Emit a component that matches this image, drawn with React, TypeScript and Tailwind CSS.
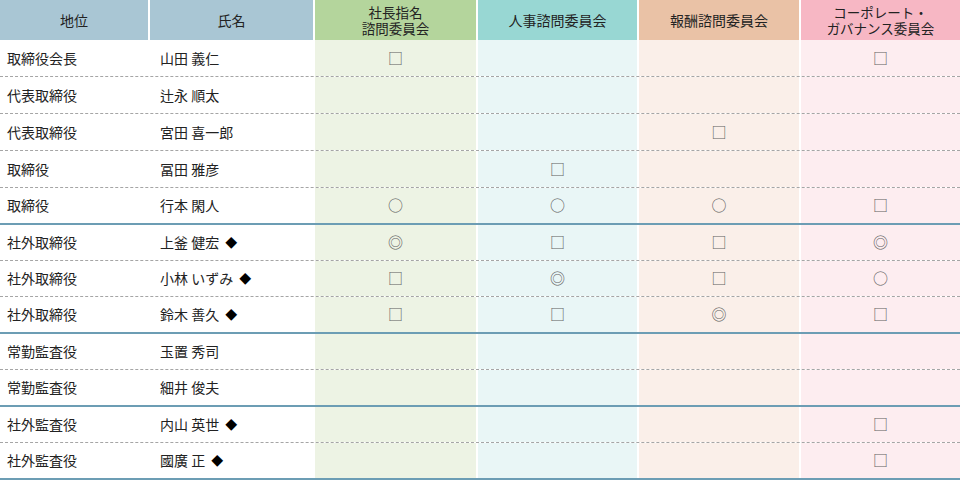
import React from "react";

type Row = {
  role: string;
  name: string;
  outside?: boolean;
  marks: string[];
  h: string;
  edge: "dash" | "solid";
};

const rows: Row[] = [
  { role: "取締役会長", name: "山田 義仁", marks: ["□", "", "", "□"], h: "h-[36px]", edge: "dash" },
  { role: "代表取締役", name: "辻永 順太", marks: ["", "", "", ""], h: "h-[36px]", edge: "dash" },
  { role: "代表取締役", name: "宮田 喜一郎", marks: ["", "", "□", ""], h: "h-[36px]", edge: "dash" },
  { role: "取締役", name: "冨田 雅彦", marks: ["", "□", "", ""], h: "h-[36px]", edge: "dash" },
  { role: "取締役", name: "行本 閑人", marks: ["○", "○", "○", "□"], h: "h-[35px]", edge: "solid" },
  { role: "社外取締役", name: "上釜 健宏", outside: true, marks: ["◎", "□", "□", "◎"], h: "h-[35px]", edge: "dash" },
  { role: "社外取締役", name: "小林 いずみ", outside: true, marks: ["□", "◎", "□", "○"], h: "h-[35px]", edge: "dash" },
  { role: "社外取締役", name: "鈴木 善久", outside: true, marks: ["□", "□", "◎", "□"], h: "h-[35px]", edge: "solid" },
  { role: "常勤監査役", name: "玉置 秀司", marks: ["", "", "", ""], h: "h-[35px]", edge: "dash" },
  { role: "常勤監査役", name: "細井 俊夫", marks: ["", "", "", ""], h: "h-[35px]", edge: "solid" },
  { role: "社外監査役", name: "内山 英世", outside: true, marks: ["", "", "", "□"], h: "h-[35px]", edge: "dash" },
  { role: "社外監査役", name: "國廣 正", outside: true, marks: ["", "", "", "□"], h: "h-[35px]", edge: "solid" },
];

const cols = "grid grid-cols-[148px_163px_161px_159px_160px_159px] gap-x-[2px]";

// committee column tints: header / body
const tints = [
  { head: "bg-[#b4d59c]", body: "bg-[#edf3e4]" },
  { head: "bg-[#98d7d3]", body: "bg-[#e9f6f6]" },
  { head: "bg-[#eac2a6]", body: "bg-[#faefe9]" },
  { head: "bg-[#f7b7c4]", body: "bg-[#fdedf0]" },
];

const heads = [
  ["社長指名", "諮問委員会"],
  ["人事諮問委員会"],
  ["報酬諮問委員会"],
  ["コーポレート・", "ガバナンス委員会"],
];

export default function App() {
  return (
    <div
      className="w-[960px] h-[481px] bg-white text-[#222] text-[14px] overflow-hidden"
      style={{ fontFamily: '"Noto Sans CJK JP", "Noto Sans", sans-serif' }}
    >
      {/* Header */}
      <div className={`${cols} h-[40px] bg-white`}>
        <div className="bg-[#a9c6d4] flex items-center justify-center">地位</div>
        <div className="bg-[#a9c6d4] flex items-center justify-center">氏名</div>
        {heads.map((lines, i) => (
          <div
            key={i}
            className={`${tints[i].head} flex flex-col items-center justify-center ${
              lines.length > 1 ? "text-[13.5px] leading-[16px]" : ""
            }`}
          >
            {lines.map((l) => (
              <span key={l}>{l}</span>
            ))}
          </div>
        ))}
      </div>

      {/* Body */}
      {rows.map((r, idx) => (
        <div
          key={idx}
          className={`${cols} bg-white ${
            r.edge === "solid"
              ? "border-b-2 border-[#6c9db4]"
              : "border-b border-dashed border-[#a5a5a5]"
          }`}
        >
          <div className={`${r.h} flex items-center pl-[7px]`}>{r.role}</div>
          <div className={`${r.h} flex items-center pl-[10px]`}>
            {r.name}
            {r.outside && <span className="ml-[6px] text-[12px] text-black">◆</span>}
          </div>
          {r.marks.map((m, i) => (
            <div
              key={i}
              className={`${r.h} ${tints[i].body} flex items-center justify-center text-[15px] text-[#5f5f5f]`}
            >
              {m}
            </div>
          ))}
        </div>
      ))}
    </div>
  );
}
